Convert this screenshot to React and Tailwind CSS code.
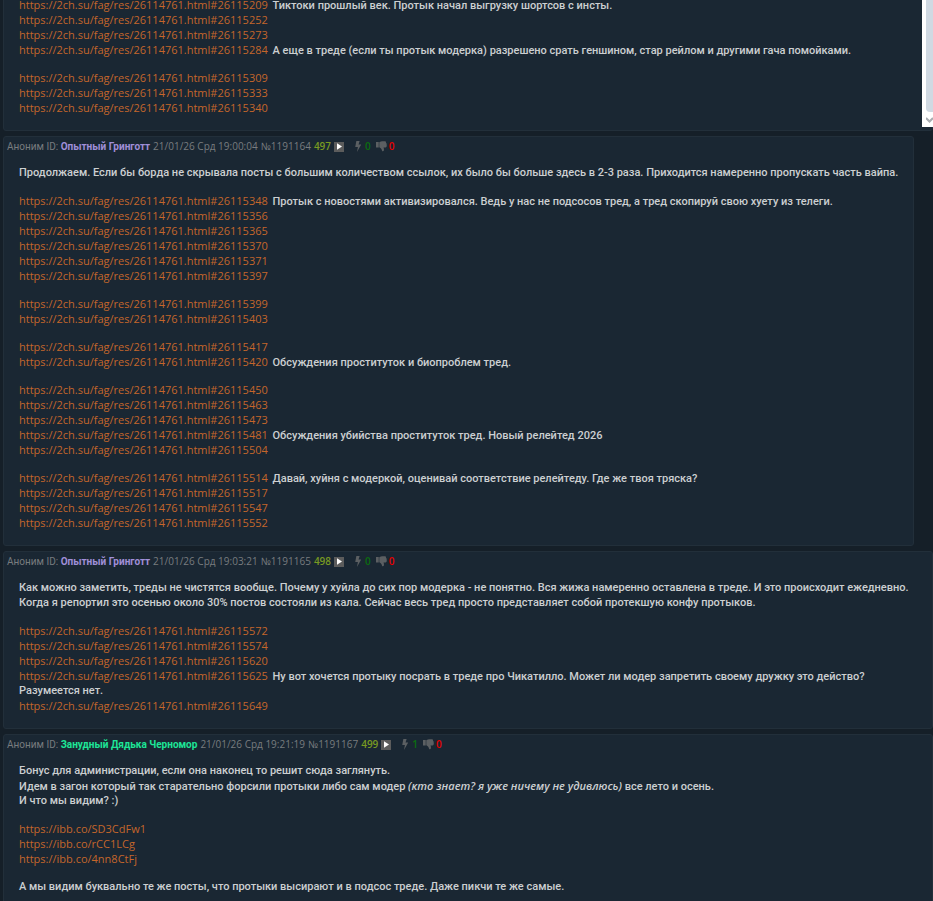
import React from "react";

const thread = "https://2ch.su/fag/res/26114761.html#";

// every post is a list of paragraphs, every paragraph is a list of lines
const posts = [
  {
    wide: true,
    body: [
      [
        { ref: "26115209", text: "Тиктоки прошлый век. Протык начал выгрузку шортсов с инсты." },
        { ref: "26115252" },
        { ref: "26115273" },
        {
          ref: "26115284",
          text: "А еще в треде (если ты протык модерка) разрешено срать геншином, стар рейлом и другими гача помойками.",
        },
      ],
      [{ ref: "26115309" }, { ref: "26115333" }, { ref: "26115340" }],
    ],
  },
  {
    author: "Опытный Гринготт",
    authorColor: "text-[#a08fd8]",
    date: "21/01/26 Срд 19:00:04",
    id: "1191164",
    num: 497,
    likes: 0,
    dislikes: 0,
    body: [
      [
        {
          text: "Продолжаем. Если бы борда не скрывала посты с большим количеством ссылок, их было бы больше здесь в 2-3 раза. Приходится намеренно пропускать часть вайпа.",
        },
      ],
      [
        {
          ref: "26115348",
          text: "Протык с новостями активизировался. Ведь у нас не подсосов тред, а тред скопируй свою хуету из телеги.",
        },
        { ref: "26115356" },
        { ref: "26115365" },
        { ref: "26115370" },
        { ref: "26115371" },
        { ref: "26115397" },
      ],
      [{ ref: "26115399" }, { ref: "26115403" }],
      [{ ref: "26115417" }, { ref: "26115420", text: "Обсуждения проституток и биопроблем тред." }],
      [
        { ref: "26115450" },
        { ref: "26115463" },
        { ref: "26115473" },
        { ref: "26115481", text: "Обсуждения убийства проституток тред. Новый релейтед 2026" },
        { ref: "26115504" },
      ],
      [
        {
          ref: "26115514",
          text: "Давай, хуйня с модеркой, оценивай соответствие релейтеду. Где же твоя тряска?",
        },
        { ref: "26115517" },
        { ref: "26115547" },
        { ref: "26115552" },
      ],
    ],
  },
  {
    wide: true,
    author: "Опытный Гринготт",
    authorColor: "text-[#a08fd8]",
    date: "21/01/26 Срд 19:03:21",
    id: "1191165",
    num: 498,
    likes: 0,
    dislikes: 0,
    body: [
      [
        {
          text: "Как можно заметить, треды не чистятся вообще. Почему у хуйла до сих пор модерка - не понятно. Вся жижа намеренно оставлена в треде. И это происходит ежедневно.",
        },
        {
          text: "Когда я репортил это осенью около 30% постов состояли из кала. Сейчас весь тред просто представляет собой протекшую конфу протыков.",
        },
      ],
      [
        { ref: "26115572" },
        { ref: "26115574" },
        { ref: "26115620" },
        {
          ref: "26115625",
          text: "Ну вот хочется протыку посрать в треде про Чикатилло. Может ли модер запретить своему дружку это действо?",
        },
        { text: "Разумеется нет." },
        { ref: "26115649" },
      ],
    ],
  },
  {
    wide: true,
    author: "Занудный Дядька Черномор",
    authorColor: "text-[#1de597]",
    date: "21/01/26 Срд 19:21:19",
    id: "1191167",
    num: 499,
    likes: 1,
    dislikes: 0,
    body: [
      [
        { text: "Бонус для администрации, если она наконец то решит сюда заглянуть." },
        {
          text: "Идем в загон который так старательно форсили протыки либо сам модер",
          note: "(кто знает? я уже ничему не удивлюсь)",
          after: "все лето и осень.",
        },
        { text: "И что мы видим? :)" },
      ],
      [
        { url: "https://ibb.co/SD3CdFw1" },
        { url: "https://ibb.co/rCC1LCg" },
        { url: "https://ibb.co/4nn8CtFj" },
      ],
      [
        {
          text: "А мы видим буквально те же посты, что протыки высирают и в подсос треде. Даже пикчи те же самые.",
        },
      ],
    ],
  },
];

const BoltIcon = () => (
  <svg viewBox="0 0 8 12" className="w-2 h-[11px] fill-[#5b5f62]">
    <path d="M2.2 0h3.6L4.6 3.8H7.5L2.9 12l1-5.4H1z" />
  </svg>
);

const ThumbDownIcon = () => (
  <svg viewBox="0 0 12 12" className="w-[11px] h-[11px] fill-[#5b5f62]">
    <path d="M0 1h3v6H0zM3.6 1.4C5 .6 6 .4 7.6.4h2c1 0 1.5.7 1.3 1.5.7.4.8 1.1.5 1.7.6.5.6 1.2.2 1.7.3 1-.3 1.7-1.2 1.7H8.2c.5 1.2.7 2.3.4 3.3-.2.9-1.4 1.1-1.9.5-.4-.6-.3-1.3-.8-2.1C5.3 7.8 4.5 7.2 3.6 6.7z" />
  </svg>
);

const PostHeader = ({ post }) => (
  <header className="flex items-center gap-[3px] pt-[2px] pb-[11px] pl-[3px] text-[10px] leading-[15px] text-[#787c7f]">
    <span className="font-['Roboto',sans-serif]">
      Аноним ID: <span className={`font-bold ${post.authorColor}`}>{post.author}</span>
    </span>
    <time>{post.date}</time>
    <a href={`#${post.id}`}>№{post.id}</a>
    <span className="font-semibold text-[#789922]">{post.num}</span>
    <button aria-label="Меню" className="flex items-center justify-center w-[10px] h-[10px] bg-[#5c5c5c]">
      <svg viewBox="0 0 6 8" className="w-[5px] h-[7px] fill-white">
        <path d="M0 0l6 4-6 4z" />
      </svg>
    </button>
    <button aria-label="Нравится" className="flex items-center gap-[3px] ml-[7px] mr-[2px] font-semibold text-[#0a6e0f]">
      <BoltIcon />
      {post.likes}
    </button>
    <button aria-label="Не нравится" className="flex items-center gap-[2px] font-semibold text-[#e80000]">
      <ThumbDownIcon />
      {post.dislikes}
    </button>
  </header>
);

const Line = ({ line }) => {
  const href = line.ref ? thread + line.ref : line.url;

  return (
    <p className="h-[15px]">
      {href && (
        <a href={href} className="mr-[2px] font-['Open_Sans',sans-serif] font-normal text-[#c4662b] hover:underline">
          {href}
        </a>
      )}
      {href && line.text && " "}
      {line.text}
      {line.note && (
        <>
          {" "}
          <em className="font-['Open_Sans',sans-serif] font-semibold">{line.note}</em> {line.after}
        </>
      )}
    </p>
  );
};

const Post = ({ post }) => (
  <article
    className={`w-fit pb-[15px] border border-[#222f3a] rounded-[3px] bg-[#1a2733] ${
      post.wide ? "min-w-full" : ""
    }`}
  >
    {post.author && <PostHeader post={post} />}
    <div className="flex flex-col gap-[13px] px-[15px] font-['Roboto',sans-serif] text-[11px] leading-[15px] font-medium text-[#cccfd1] whitespace-nowrap">
      {post.body.map((paragraph, i) => (
        <div key={i}>
          {paragraph.map((line, j) => (
            <Line key={j} line={line} />
          ))}
        </div>
      ))}
    </div>
  </article>
);

const App = () => {
  return (
    <div className="relative h-screen overflow-hidden bg-[#151f28] font-['Open_Sans',sans-serif]">
      <main className="flex flex-col gap-[5px] -mt-1 pl-[3px]">
        {posts.map((post, i) => (
          <Post key={i} post={post} />
        ))}
      </main>

      {/* end of the scrollbar of the panel above */}
      <div className="absolute top-0 right-0 flex flex-col items-end w-[11px] h-[127px] bg-white">
        <div className="w-[7px] h-28 rounded-bl bg-[#d0d9e2]" />
        <svg viewBox="0 0 7 6" className="w-[7px] h-[6px] mt-[5px] fill-none stroke-[#a9adb1]">
          <path d="M0 1l3.5 3.5L7 1" strokeWidth="2" />
        </svg>
      </div>
    </div>
  );
};

export default App;
